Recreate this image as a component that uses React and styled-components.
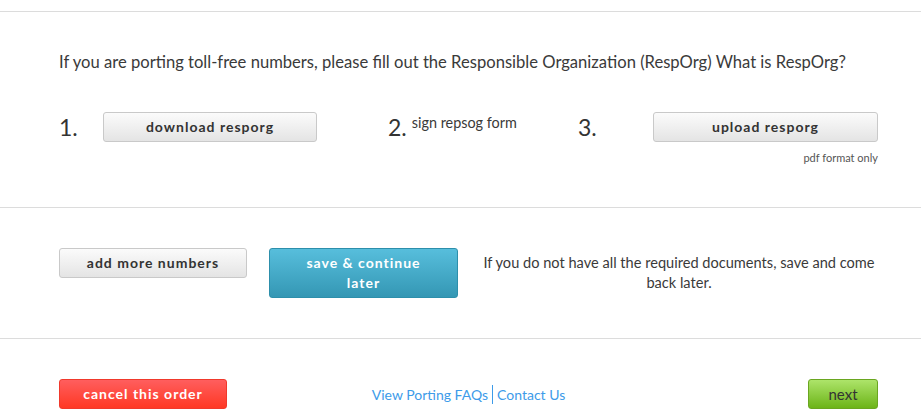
import React from "react";
import styled, { createGlobalStyle } from "styled-components";

const GlobalStyle = createGlobalStyle`
  body {
    margin: 0;
    background: #ffffff;
    font-family: "Lato", "Open Sans", sans-serif;
    color: #3a3a3a;
  }
`;

const Page = styled.div`
  width: 921px;
  padding-top: 11px;
`;

const Section = styled.section`
  border-top: 1px solid #dcdcdc;
  padding: ${(p) => p.$pad || "40px 43px 40px 59px"};
`;

const Intro = styled.p`
  margin: 0;
  font-size: 16.6px;
  line-height: 24px;
  color: #3a3a3a;
`;

const Steps = styled.div`
  display: grid;
  grid-template-columns: 329px 190px 1fr;
  margin-top: 38px;
  align-items: start;
`;

const Step = styled.div`
  display: flex;
  align-items: flex-start;
`;

const Num = styled.span`
  font-size: 23px;
  line-height: 30px;
  color: #333;
  width: ${(p) => p.$w || "auto"};
  flex-shrink: 0;
`;

const StepText = styled.span`
  font-size: 14.4px;
  line-height: 18px;
  padding-top: 2px;
  margin-left: 5px;
  color: #3a3a3a;
`;

const UploadCol = styled.div`
  margin-left: auto;
  display: flex;
  flex-direction: column;
  align-items: flex-end;
`;

const Note = styled.span`
  font-size: 11px;
  line-height: 14px;
  margin-top: 9px;
  color: #555;
`;

const Button = styled.button`
  font-family: "Lato", "Open Sans", sans-serif;
  font-weight: 700;
  font-size: 14px;
  letter-spacing: 1px;
  width: ${(p) => p.$w}px;
  height: ${(p) => p.$h || 30}px;
  border-radius: 3px;
  padding: 0 10px;
  line-height: 20px;
  cursor: pointer;
  color: #333;
  border: 1px solid #c9c9c9;
  background: linear-gradient(#fbfbfb, #e4e4e4);
  flex-shrink: 0;
`;

const TealButton = styled(Button)`
  color: #fff;
  padding: 0 30px;
  border-color: #2d8fab;
  background: linear-gradient(#57bedc, #3497b4);
`;

const RedButton = styled(Button)`
  color: #fff;
  border-color: #f0392c;
  background: linear-gradient(#ff5e5e, #ff3824);
`;

const GreenButton = styled(Button)`
  font-weight: 400;
  letter-spacing: 0;
  font-size: 15px;
  border-color: #6aa620;
  background: linear-gradient(#ade46a, #6cb418);
`;

const ActionRow = styled.div`
  display: flex;
  align-items: flex-start;
  gap: 22px;
`;

const Hint = styled.p`
  flex: 1;
  margin: 0;
  padding-top: 5px;
  font-size: 14.6px;
  line-height: 20px;
  text-align: center;
  color: #3a3a3a;
`;

const Footer = styled.div`
  display: grid;
  grid-template-columns: 1fr auto 1fr;
  align-items: center;
`;

const Links = styled.div`
  display: flex;
  align-items: center;
  font-size: 14px;
`;

const Link = styled.a`
  color: #3d9be9;
  text-decoration: none;
  cursor: pointer;
  padding: ${(p) => (p.$first ? "0 4px 0 0" : "0 0 0 4px")};
  border-right: ${(p) => (p.$first ? "1px solid #3d9be9" : "none")};
  line-height: 19px;
`;

const Right = styled.div`
  justify-self: end;
`;

export default function App() {
  return (
    <Page>
      <GlobalStyle />
      <Section $pad="38px 43px 42px 59px">
        <Intro>
          If you are porting toll-free numbers, please fill out the Responsible
          Organization (RespOrg) What is RespOrg?
        </Intro>
        <Steps>
          <Step>
            <Num $w="44px">1.</Num>
            <Button $w={214}>download resporg</Button>
          </Step>
          <Step>
            <Num>2.</Num>
            <StepText>sign repsog form</StepText>
          </Step>
          <Step>
            <Num>3.</Num>
            <UploadCol>
              <Button $w={225}>upload resporg</Button>
              <Note>pdf format only</Note>
            </UploadCol>
          </Step>
        </Steps>
      </Section>
      <Section $pad="40px 43px 40px 59px">
        <ActionRow>
          <Button $w={188}>add more numbers</Button>
          <TealButton $w={189} $h={50}>
            save &amp; continue later
          </TealButton>
          <Hint>
            If you do not have all the required documents, save and come back
            later.
          </Hint>
        </ActionRow>
      </Section>
      <Section $pad="40px 43px 10px 59px">
        <Footer>
          <div>
            <RedButton $w={168}>cancel this order</RedButton>
          </div>
          <Links>
            <Link $first>View Porting FAQs</Link>
            <Link>Contact Us</Link>
          </Links>
          <Right>
            <GreenButton $w={70}>next</GreenButton>
          </Right>
        </Footer>
      </Section>
    </Page>
  );
}
